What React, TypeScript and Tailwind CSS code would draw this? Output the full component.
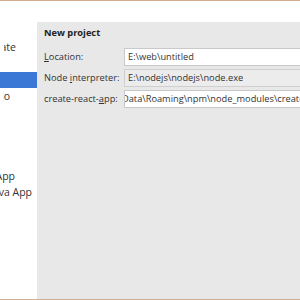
const sidebar: { text: string; left: number; right: number }[] = [
  { text: 'HTML5 Boilerplate', left: 4, right: 16 },
  { text: '', left: 0, right: 0 },
  { text: '', left: 0, right: 0 },
  { text: 'Dojo', left: 3, right: 10 },
  { text: '', left: 0, right: 0 },
  { text: '', left: 0, right: 0 },
  { text: '', left: 0, right: 0 },
  { text: '', left: 0, right: 0 },
  { text: 'Node.js Express App', left: 0, right: 15 },
  { text: 'PhoneGap/Cordova App', left: 0, right: 32 },
];

const font = { fontFamily: '"Open Sans", "Noto Sans", sans-serif' };

export default function App() {
  return (
    <div
      className="w-[300px] h-[300px] overflow-hidden bg-white border-t border-b border-[#d4ae8a] flex text-[9.25px] text-[#333]"
      style={font}
    >
      <div className="w-[37px] shrink-0 bg-white pt-[38px]">
        {sidebar.map((item, i) => (
          <div
            key={i}
            className={`leading-[16px] ${i === 2 ? 'h-[16px] mt-[1px] bg-[#3b78d6]' : 'h-[16px]'}`}
          >
            {item.text && (
              <div
                className="flex justify-end overflow-hidden"
                style={{ marginLeft: item.left, width: item.right - item.left }}
              >
                <span className="whitespace-nowrap shrink-0 text-[10.5px]">{item.text}</span>
              </div>
            )}
          </div>
        ))}
      </div>

      <div className="flex-1 flex flex-col min-w-0">
        <div className="h-[21px] shrink-0 bg-white"></div>
        <div className="flex-1 bg-[#e8e8e8] pl-[7px] pt-[3px] overflow-hidden">
          <div className="font-bold leading-[16px] text-[#222]">New project</div>

          <div className="mt-[7px] flex flex-col gap-[3px] whitespace-nowrap">
            <div className="flex items-center h-[18px]">
              <div className="w-[80px] shrink-0">
                <u>L</u>ocation:
              </div>
              <div className="w-[220px] shrink-0 h-[18px] bg-white border border-[#c9c9c9] px-[3px] leading-[16px] overflow-hidden">
                E:\web\untitled
              </div>
            </div>
            <div className="flex items-center h-[18px]">
              <div className="w-[80px] shrink-0">
                Node <u>i</u>nterpreter:
              </div>
              <div className="w-[220px] shrink-0 h-[18px] bg-[#ececec] border border-[#cfcfcf] px-[3px] leading-[16px] overflow-hidden">
                E:\nodejs\nodejs\node.exe
              </div>
            </div>
            <div className="flex items-center h-[18px]">
              <div className="w-[80px] shrink-0">
                create-react-<u>a</u>pp:
              </div>
              <div className="w-[220px] shrink-0 h-[18px] bg-white border border-[#c9c9c9] leading-[16px] overflow-hidden">
                <span className="inline-block -ml-[3px]">Data\Roaming\npm\node_modules\create-react-app</span>
              </div>
            </div>
          </div>
        </div>
      </div>
    </div>
  );
}
